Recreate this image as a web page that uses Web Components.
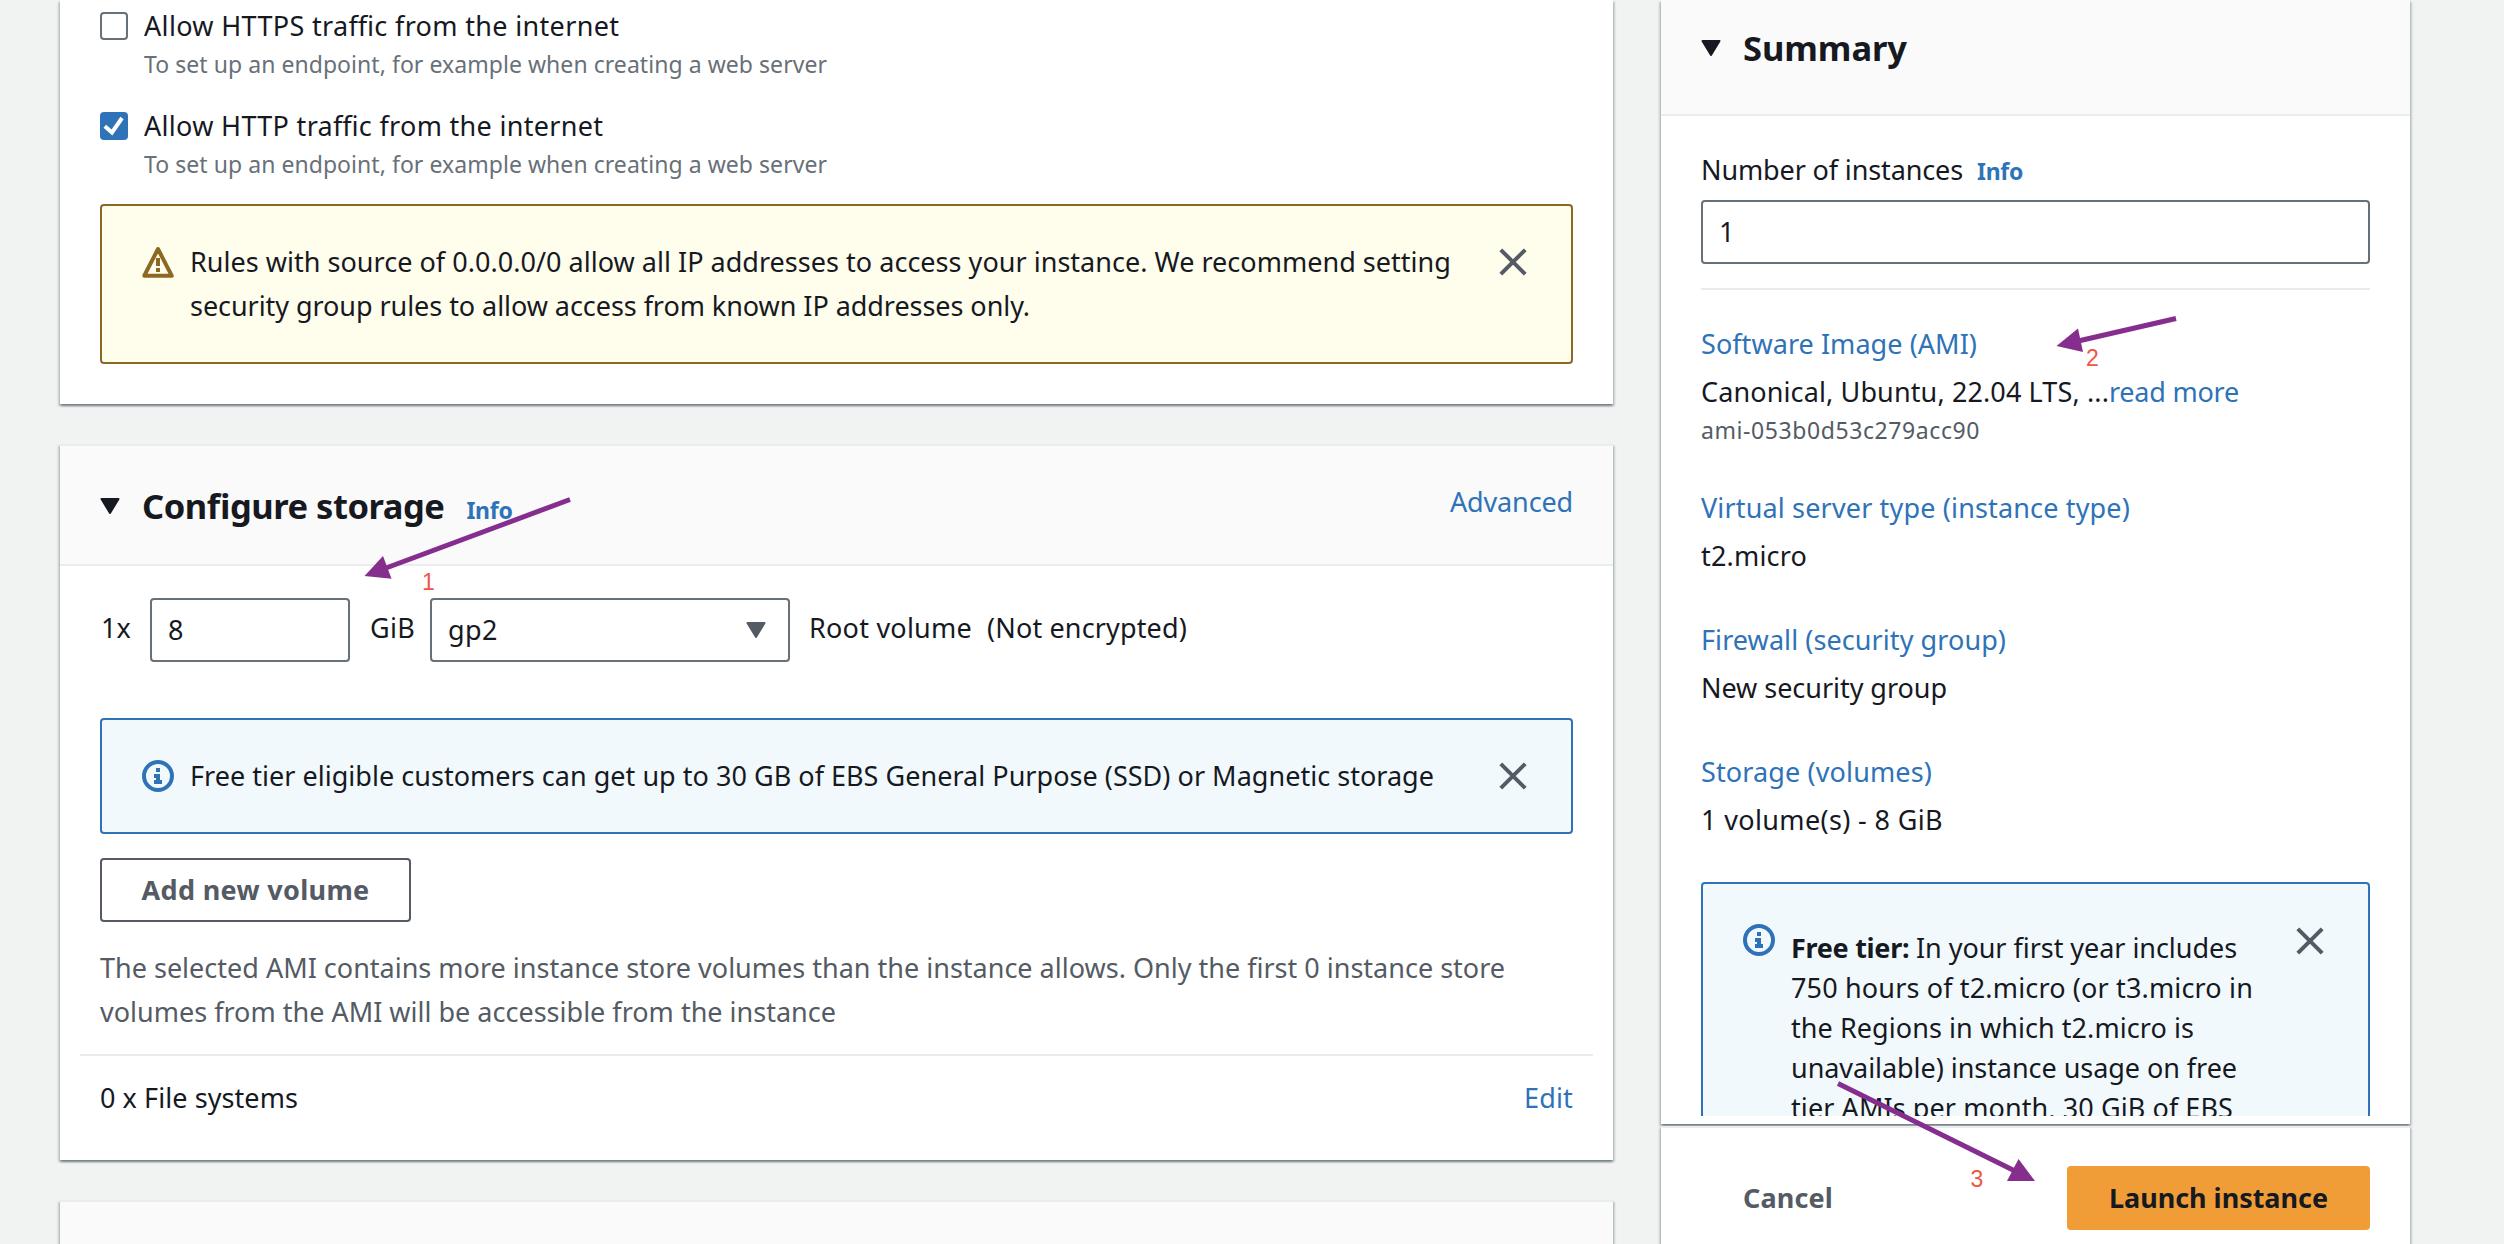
<!DOCTYPE html>
<html lang="en">
<head>
<meta charset="utf-8">
<title>Launch an instance</title>
<style>
  html, body { margin: 0; }
  body {
    width: 2504px; height: 1244px; overflow: hidden; background: #f1f3f3;
    font: 450 27px/36px "Noto Sans", "Open Sans", sans-serif; color: #16191f;
    --link: #2e73b8; --muted: #545b64; --soft: #687078; --rule: #eaeded;
  }
</style>
</head>
<body>
<launch-page></launch-page>

<script>
const define = (name, html, setup) => {
  const tpl = document.createElement('template');
  tpl.innerHTML = html;
  customElements.define(name, class extends HTMLElement {
    constructor() {
      super();
      this.attachShadow({ mode: 'open' }).appendChild(tpl.content.cloneNode(true));
    }
    connectedCallback() { if (setup) setup(this, this.shadowRoot); }
  });
};

/* Text run tracked to a given advance width */
define('ui-text', `<style>
  :host { display: block; flex: none; font-feature-settings: "liga" 1; }
  :host([tone=link]) { color: var(--link); }
  :host([tone=muted]) { color: var(--muted); }
  :host([tone=soft]) { color: var(--soft); }
  :host([small]) { font-size: 23px; }
  :host([bold]) { font-weight: 700; }
  :host([title]) { font-size: 34.5px; font-weight: 700; line-height: 48px; }
  span { display: block; width: max-content; white-space: pre; }
</style><span><slot></slot></span>`, (el, root) => {
  const w = +el.getAttribute('w');
  if (!w) return;
  const natural = root.querySelector('span').getBoundingClientRect().width;
  el.style.letterSpacing = ((w - natural) / el.textContent.length).toFixed(3) + 'px';
});

const icons = {
  warn: `<svg width="32" height="32" viewBox="0 0 32 32"><path d="M16 3 29.7 29.7H2.3Z" fill="none" stroke="#8d6823" stroke-width="4" stroke-linejoin="round"/><path d="M16 12v8M16 22v4" stroke="#8d6823" stroke-width="4"/></svg>`,
  info: `<svg width="32" height="32" viewBox="0 0 32 32"><circle cx="16" cy="16" r="14" fill="none" stroke="#2e73b8" stroke-width="4"/><path d="M14 8h4v4h-4zM12 14h6v6h2v4h-8v-4h2v-2h-2z" fill="#2e73b8"/></svg>`,
  close: `<svg width="28" height="28" viewBox="0 0 28 28"><path d="M1.8 1.8 26.2 26.2M26.2 1.8 1.8 26.2" stroke="#545b64" stroke-width="4"/></svg>`,
  caret: `<svg width="20" height="16" viewBox="0 0 20 16"><path d="M1.5 1h17L10 15Z" fill="currentColor" stroke="currentColor" stroke-width="2" stroke-linejoin="round"/></svg>`,
  check: `<svg width="28" height="28" viewBox="0 0 28 28"><path d="M4.8 14.2 12 20.5 22 6" fill="none" stroke="#fff" stroke-width="4"/></svg>`
};
define('ui-icon', `<style>:host { display: block; flex: none; } svg { display: block; }</style><div></div>`,
  (el, root) => { root.querySelector('div').innerHTML = icons[el.getAttribute('name')] || ''; });

define('ui-panel', `
<style>
  :host { display: block; position: relative; background: #fff;
    box-shadow: 0 2px 2px 0 rgba(0,28,36,.35), 2px 2px 2px 0 rgba(0,28,36,.15), -2px 2px 2px 0 rgba(0,28,36,.15); }
  :host([topped]) { border-top: 2px solid #eaeded; }
  header { display: none; box-sizing: border-box; height: 120px; padding: 1px 40px 0; background: #fafafa;
    border-bottom: 2px solid #eaeded; align-items: center; gap: 22px; }
  :host([headed]) header { display: flex; }
  :host([high]) header { height: 116px; padding: 0 40px 19px; }
  .body { padding: 0 40px; }
  .actions { margin-left: auto; padding-bottom: 8px; }
</style>
<header><ui-icon name="caret"></ui-icon><slot name="title"></slot><div class="actions"><slot name="actions"></slot></div></header>
<div class="body"><slot></slot></div>`);

define('ui-check', `
<style>
  :host { display: flex; gap: 16px; height: 74px; }
  .box { box-sizing: border-box; width: 28px; height: 28px; margin-top: 4px; border: 2px solid #687078; border-radius: 4px; flex: none; }
  ui-icon { display: none; }
  :host([checked]) .box { background: #2e73b8; border: 0; }
  :host([checked]) ui-icon { display: block; }
  .text { display: flex; flex-direction: column; gap: 2px; }
</style>
<div class="box"><ui-icon name="check"></ui-icon></div><div class="text"><slot></slot></div>`);

define('ui-alert', `
<style>
  :host { display: flex; box-sizing: border-box; border: 2px solid #2e73b8; border-radius: 4px; background: #f2f9fd;
    padding: 34px 44px 34px 40px; line-height: 44px; }
  :host([kind=warn]) { border-color: #8d6823; background: #fffdec; }
  :host([roomy]) { line-height: 40px; padding: 44px 44px 44px 40px; }
  .icon { margin: 6px 16px 0 0; }
  .close { margin: 8px 0 0 auto; }
  :host([roomy]) .icon { margin-top: -4px; }
  :host([roomy]) .close { margin-top: -1px; }
</style>
<div class="icon"><ui-icon></ui-icon></div><div><slot></slot></div><div class="close"><ui-icon name="close"></ui-icon></div>`,
(el, root) => {
  const icon = root.querySelector('.icon ui-icon');
  icon.setAttribute('name', el.getAttribute('kind'));
  icon.connectedCallback();
});

define('ui-field', `
<style>
  :host { display: flex; box-sizing: border-box; height: 64px; border: 2px solid #687078; border-radius: 4px; background: #fff;
    align-items: center; padding: 0 22px 0 16px; }
  ui-icon { display: none; margin-left: auto; color: #545b64; }
  :host([select]) ui-icon { display: block; }
</style><slot></slot><ui-icon name="caret"></ui-icon>`);

define('ui-button', `
<style>
  :host { display: flex; box-sizing: border-box; height: 64px; align-items: center; justify-content: center;
    border: 2px solid #545b64; border-radius: 4px; color: #545b64; font-weight: 700; }
  :host([primary]) { background: #f09d37; border-color: #f09d37; color: #16191f; }
</style><slot></slot>`);

define('ui-fact', `
<style>
  :host { display: block; line-height: 48px; }
</style><slot></slot>`);

/* Numbered arrows drawn over the page */
define('step-marks', `
<style>
  :host { position: absolute; left: 0; top: 0; display: block; pointer-events: none; }
  svg { display: block; }
  text { font: 23px "Liberation Sans", Arial, sans-serif; fill: #ec5744; }
</style>
<svg width="2504" height="1244" viewBox="0 0 2504 1244">
  <g stroke="#862e8e" stroke-width="5">
    <path d="M570 499.5 382 569.5"/><path d="M2176 318.5 2076 341.5"/><path d="M1838 1083.5 2016 1171.5"/>
  </g>
  <g fill="#862e8e">
    <path d="M364.5 576 383 556 391.5 578.7Z"/><path d="M2056.5 346 2078 328.5 2083 352Z"/><path d="M2035 1181 2018.5 1159 2007 1181Z"/>
  </g>
  <text x="422" y="590">1</text><text x="2086" y="366">2</text><text x="1970.5" y="1187">3</text>
</svg>`);

define('storage-panel', `
<style>
  :host { display: block; }
  .volume { display: flex; align-items: center; height: 64px; margin: 32px 0 56px; }
  .volume > ui-text { padding-bottom: 5px; }
  .add { width: 311px; margin: 24px 0; }
  .note { line-height: 44px; }
  .rule { height: 2px; background: #ebebeb; margin: 20px -20px; }
  .files { display: flex; justify-content: space-between; line-height: 44px; padding-bottom: 40px; }
</style>
<ui-panel topped headed>
  <div slot="title" style="display:flex;align-items:baseline;gap:22px"><ui-text title w="302">Configure storage</ui-text><ui-text small bold tone="link" w="46">Info</ui-text></div>
  <ui-text slot="actions" tone="link" w="123">Advanced</ui-text>
  <div class="volume">
    <ui-text w="30" style="margin:0 19px 0 1px">1x</ui-text>
    <ui-field style="width:200px"><ui-text>8</ui-text></ui-field>
    <ui-text w="45" style="margin:0 15px 0 20px">GiB</ui-text>
    <ui-field select style="width:360px"><ui-text w="50">gp2</ui-text></ui-field>
    <ui-text w="163" style="margin:0 15px 0 19px">Root volume</ui-text>
    <ui-text w="200">(Not encrypted)</ui-text>
  </div>
  <ui-alert kind="info"><ui-text w="1244">Free tier eligible customers can get up to 30 GB of EBS General Purpose (SSD) or Magnetic storage</ui-text></ui-alert>
  <ui-button class="add"><ui-text w="228">Add new volume</ui-text></ui-button>
  <div class="note">
    <ui-text tone="muted" w="1405">The selected AMI contains more instance store volumes than the instance allows. Only the first 0 instance store</ui-text>
    <ui-text tone="muted" w="736">volumes from the AMI will be accessible from the instance</ui-text>
  </div>
  <div class="rule"></div>
  <div class="files"><ui-text w="198">0 x File systems</ui-text><ui-text tone="link" w="49">Edit</ui-text></div>
</ui-panel>`);

define('summary-panel', `
<style>
  :host { display: block; }
  .count { display: flex; align-items: baseline; gap: 14px; height: 36px; padding: 36px 0 12px; }
  .rule { height: 2px; background: #ebebeb; margin: 24px 0 30px; }
  .facts { display: flex; flex-direction: column; gap: 36px; }
  .line { display: flex; }
  .clip { height: 234px; overflow: hidden; margin-top: 38px; }
  .end { height: 8px; }
  .footer { display: flex; justify-content: space-between; align-items: center; height: 102px; padding: 38px 0 0 42px; box-sizing: border-box; }
  .foot { margin-top: 2px; border-top: 2px solid #eaeded; height: 200px; }
  .launch { width: 303px; }
</style>
<ui-panel headed high>
  <ui-text slot="title" title w="164">Summary</ui-text>
  <div class="count"><ui-text w="262">Number of instances</ui-text><ui-text small bold tone="link" w="46">Info</ui-text></div>
  <ui-field><ui-text>1</ui-text></ui-field>
  <div class="rule"></div>
  <div class="facts">
    <ui-fact style="margin-bottom:4px">
      <ui-text tone="link" w="276">Software Image (AMI)</ui-text>
      <div class="line"><ui-text w="408">Canonical, Ubuntu, 22.04 LTS, ...</ui-text><ui-text tone="link" w="130">read more</ui-text></div>
      <ui-text small tone="muted" w="279" style="line-height:28px">ami-053b0d53c279acc90</ui-text>
    </ui-fact>
    <ui-fact><ui-text tone="link" w="429">Virtual server type (instance type)</ui-text><ui-text w="106">t2.micro</ui-text></ui-fact>
    <ui-fact><ui-text tone="link" w="305">Firewall (security group)</ui-text><ui-text w="246">New security group</ui-text></ui-fact>
    <ui-fact><ui-text tone="link" w="231">Storage (volumes)</ui-text><ui-text w="242">1 volume(s) - 8 GiB</ui-text></ui-fact>
  </div>
  <div class="clip">
    <ui-alert kind="info" roomy>
      <div class="line"><ui-text bold w="125">Free tier: </ui-text><ui-text w="321">In your first year includes</ui-text></div>
      <ui-text w="462">750 hours of t2.micro (or t3.micro in</ui-text>
      <ui-text w="403">the Regions in which t2.micro is</ui-text>
      <ui-text w="446">unavailable) instance usage on free</ui-text>
      <ui-text w="442">tier AMIs per month, 30 GiB of EBS</ui-text>
    </ui-alert>
  </div>
  <div class="end"></div>
</ui-panel>
<ui-panel class="foot">
  <div class="footer"><ui-text bold tone="muted" w="90">Cancel</ui-text><ui-button class="launch" primary><ui-text w="219">Launch instance</ui-text></ui-button></div>
</ui-panel>`);

define('launch-page', `
<style>
  :host { display: block; position: relative; width: 2504px; height: 1244px; overflow: hidden; }
  .columns { display: grid; grid-template-columns: 1553px 749px; column-gap: 48px; padding-left: 60px; align-items: start; }
  .main { display: flex; flex-direction: column; gap: 40px; }
  .rules { padding: 8px 0 40px; }
  ui-check + ui-check { margin: 26px 0 22px; }
  .next { height: 200px; }
</style>
<div class="columns">
  <div class="main">
    <ui-panel>
      <div class="rules">
        <ui-check><ui-text w="476">Allow HTTPS traffic from the internet</ui-text><ui-text small tone="soft" w="683">To set up an endpoint, for example when creating a web server</ui-text></ui-check>
        <ui-check checked><ui-text w="460">Allow HTTP traffic from the internet</ui-text><ui-text small tone="soft" w="683">To set up an endpoint, for example when creating a web server</ui-text></ui-check>
        <ui-alert kind="warn">
          <ui-text w="1261">Rules with source of 0.0.0.0/0 allow all IP addresses to access your instance. We recommend setting</ui-text>
          <ui-text w="840">security group rules to allow access from known IP addresses only.</ui-text>
        </ui-alert>
      </div>
    </ui-panel>
    <storage-panel></storage-panel>
    <ui-panel class="next" topped headed></ui-panel>
  </div>
  <summary-panel></summary-panel>
</div>
<step-marks></step-marks>`);

/* The empty section below the fold shows no heading controls */
const next = document.querySelector('launch-page').shadowRoot.querySelector('.next');
next.shadowRoot.querySelector('header ui-icon').style.visibility = 'hidden';
</script>
</body>
</html>
